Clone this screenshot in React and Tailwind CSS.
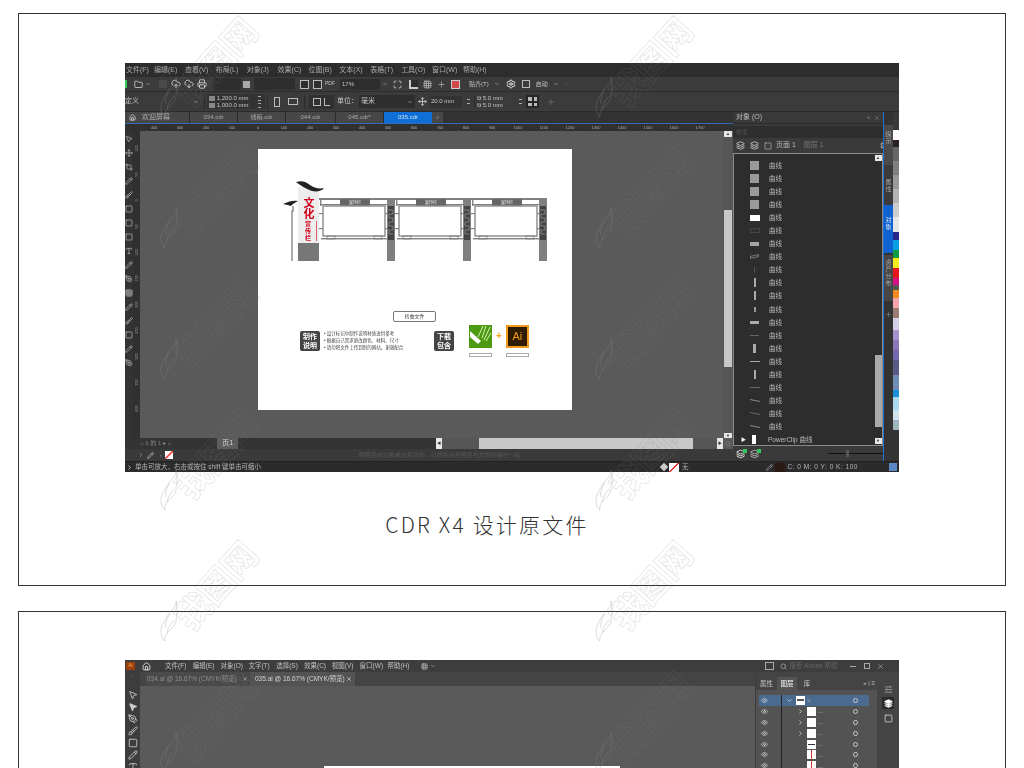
import {
  Brush,
  ChevronDown,
  ChevronRight,
  CloudDownload,
  CloudUpload,
  Crop,
  Eye,
  Folder,
  Grid3x3,
  House,
  Layers,
  Maximize,
  MousePointer2,
  Move,
  PenTool,
  Pencil,
  Plus,
  Printer,
  Search,
  Settings,
  SlidersHorizontal,
  Square,
  Type,
  X,
} from "lucide-react";

const FONT = "font-['Liberation_Sans','Noto_Sans_CJK_SC',sans-serif]";

const CDR_MENU = ["文件(F)", "编辑(E)", "查看(V)", "布局(L)", "对象(J)", "效果(C)", "位图(B)", "文本(X)", "表格(T)", "工具(O)", "窗口(W)", "帮助(H)"];
const CDR_TABS = [
  { label: "034.cdr", w: "w-[48px]" },
  { label: "线稿.cdr", w: "w-[48px]" },
  { label: "044.cdr", w: "w-[50px]" },
  { label: "045.cdr*", w: "w-[48px]" },
];
const RULER = ["400", "300", "200", "100", "0", "100", "200", "300", "400", "500", "600", "700", "800", "900", "1000", "1100", "1200", "1300", "1400", "1500", "1600", "1700"];
const V_RULER = ["100", "50", "0", "50", "100", "150", "200", "250", "300", "350", "400"];

const OBJECT_ROWS = [
  "h-[9px] w-[9px] bg-[#9a9a9a]",
  "h-[9px] w-[9px] bg-[#9a9a9a]",
  "h-[9px] w-[9px] bg-[#9a9a9a]",
  "h-[9px] w-[9px] bg-[#9a9a9a]",
  "h-[6px] w-[10px] bg-white",
  "h-[5px] w-[10px] border border-[#4a4340]",
  "h-[4px] w-[9px] bg-[#a5a5a5]",
  "h-[3px] w-[9px] -skew-y-12 border border-[#777]",
  "h-[6px] w-px bg-[#555]",
  "h-[9px] w-[2px] bg-[#aaa]",
  "h-[9px] w-[2px] bg-[#aaa]",
  "h-[5px] w-[2px] bg-[#999]",
  "h-[3px] w-[9px] bg-[#aaa]",
  "h-px w-[9px] bg-[#666]",
  "h-[9px] w-[3px] bg-[#aaa]",
  "h-px w-[10px] bg-[#aaa]",
  "h-[9px] w-[2px] bg-[#aaa]",
  "h-px w-[10px] bg-[#666]",
  "h-px w-[10px] rotate-12 bg-[#888]",
  "h-px w-[10px] rotate-12 bg-[#666]",
  "h-px w-[10px] rotate-12 bg-[#888]",
];

const PALETTE = [
  "h-[18px] bg-[#3a3a3a]", "h-[10px] bg-white", "h-[7px] bg-[#2b211f]", "h-[14px] bg-[#666]", "h-[14px] bg-[#808080]", "h-[14px] bg-[#999]", "h-[14px] bg-[#b3b3b3]", "h-[14px] bg-[#ccc]", "h-[15px] bg-[#e6e6e6]",
  "h-[8px] bg-[#26288a]", "h-[10px] bg-[#0a9fe0]", "h-[8px] bg-[#0f9b46]", "h-[10px] bg-[#f8ec1a]", "h-[10px] bg-[#e3161e]", "h-[7px] bg-[#d3127f]", "h-[5px] bg-[#555]",
  "h-[8px] bg-[#f08c1c]", "h-[10px] bg-[#f2a7ae]", "h-[10px] bg-[#9b7d70]", "h-[12px] bg-[#d6cfe8]", "h-[10px] bg-[#a693cc]", "h-[10px] bg-[#8c76b8]", "h-[10px] bg-[#7566ad]", "h-[15px] bg-[#5b5a86]",
  "h-[15px] bg-[#6f8db5]", "h-[7px] bg-[#1b8ed8]", "h-[13px] bg-[#a9d8ef]", "h-[10px] bg-[#cfe3ec]", "h-[10px] bg-[#9fb4bd]",
];

const AI_MENU = ["文件(F)", "编辑(E)", "对象(O)", "文字(T)", "选择(S)", "效果(C)", "视图(V)", "窗口(W)", "帮助(H)"];
const AI_TOOLS = [MousePointer2, MousePointer2, PenTool, Brush, Square, Pencil, Type];
const AI_LAYERS = ["main", "group", "group", "group", "mark", "path", "path"];

function Flame() {
  return (
    <svg viewBox="0 0 24 42" className="h-[42px] w-[24px] shrink-0 fill-none stroke-[#8a8a8a]/30">
      <path d="M18 1c1 6-5 9-8 14S3 26 3 31s1 8 4 10c-1-5 2-8 5-11s7-7 6-12c2-5 1-12 0-17Z" />
      <path d="M12 14c-3 4-5 9-4 14M16 20c-3 4-6 7-7 13" />
    </svg>
  );
}

function Watermark() {
  return (
    <div className="relative h-[131px] w-[110px]">
      <div className="absolute left-0 top-[66px]">
        <Flame />
      </div>
      <div className="absolute left-[2px] top-[32px] flex h-[40px] w-[112px] -rotate-[48deg] items-center justify-center whitespace-nowrap text-[35px] font-bold leading-none tracking-[-1px] text-transparent [-webkit-text-stroke:1px_rgba(125,125,125,0.18)]">
        我图网
      </div>
    </div>
  );
}

function Well({ className = "" }) {
  return <div className={`h-[12px] shrink-0 bg-[#2e2e2e] ${className}`} />;
}

function Spinner() {
  return (
    <div className="flex w-[12px] shrink-0 flex-col items-center justify-center gap-[3px]">
      <span className="h-px w-[3px] bg-[#aaa]" />
      <span className="h-px w-[3px] bg-[#aaa]" />
    </div>
  );
}

function CdrMenuBar() {
  return (
    <div className="flex h-[14px] shrink-0 items-center bg-[#2d2d2d] text-[7px] text-[#aaa]">
      <span className="w-[29px] shrink-0 pl-px">文件(F)</span>
      {CDR_MENU.slice(1).map((item) => (
        <span key={item} className="w-[30.9px] shrink-0 whitespace-nowrap">
          {item}
        </span>
      ))}
    </div>
  );
}

function CdrToolBar() {
  return (
    <div className="flex h-[15px] shrink-0 items-center border-b border-[#2b2b2b] bg-[#3b3b3b] text-[6px] text-[#c5c5c5]">
      <span className="h-[8px] w-[2px] bg-[#35c75a]" />
      <Folder size={9} className="ml-[7px] text-[#ddd]" />
      <ChevronDown size={6} className="ml-[2px]" />
      <span className="ml-[8px] h-[8px] w-[8px] bg-[#4a4a4a]" />
      <CloudUpload size={10} className="ml-[4px] text-[#ddd]" />
      <CloudDownload size={10} className="ml-[3px] text-[#ddd]" />
      <Printer size={10} className="ml-[3px] text-[#ddd]" />
      <Well className="ml-[6px] w-[28px]" />
      <span className="ml-[2px] h-[7px] w-[7px] bg-[#aaa]" />
      <Well className="ml-[4px] w-[41px]" />
      <span className="ml-[5px] h-[9px] w-[9px] border border-[#bbb] bg-[#2e2e2e]" />
      <span className="ml-[4px] h-[9px] w-[9px] border border-[#bbb] bg-[#2e2e2e]" />
      <span className="ml-[3px] w-[10px] text-[5px]">PDF</span>
      <div className="ml-[5px] flex h-[11px] w-[40px] items-center bg-[#2e2e2e] pl-[2px]">17%</div>
      <ChevronDown size={6} className="ml-[2px]" />
      <Maximize size={9} className="ml-[5px] text-[#ddd]" />
      <span className="ml-[7px] h-[9px] w-[9px] border-b-2 border-l-2 border-[#ccc] bg-[#2e2e2e]" />
      <Grid3x3 size={9} className="ml-[5px] bg-[#2e2e2e] text-[#ccc]" />
      <Plus size={9} className="ml-[5px] text-[#aaa]" />
      <span className="ml-[5px] h-[9px] w-[9px] border border-[#ccc] bg-[#d0494a]" />
      <span className="ml-[9px] whitespace-nowrap">贴齐(T)</span>
      <ChevronDown size={6} className="ml-[5px]" />
      <Settings size={10} className="ml-[6px] text-white" />
      <span className="ml-[6px] h-[8px] w-[8px] border border-[#bbb]" />
      <span className="ml-[6px] whitespace-nowrap">启动</span>
      <ChevronDown size={6} className="ml-[5px]" />
      <X size={7} className="ml-[4px] text-[#555]" />
    </div>
  );
}

function CdrPropertyBar() {
  return (
    <div className="flex h-[20px] shrink-0 items-center border-b border-[#2b2b2b] bg-[#3b3b3b] text-[6px] text-[#c5c5c5]">
      <div className="flex h-[12px] w-[76px] shrink-0 items-center justify-between overflow-hidden pr-[2px] text-[7px]">
        <span>定义</span>
        <ChevronDown size={6} />
      </div>
      <span className="ml-[3px] h-[14px] w-px bg-[#2b2b2b]" />
      <div className="ml-[2px] flex h-[15px] w-[58px] shrink-0 flex-col justify-center bg-[#333] pl-[2px] leading-[7px]">
        <div className="flex items-center gap-[2px]">
          <span className="h-[5px] w-[6px] bg-[#888]" />
          <span className="w-[36px] whitespace-nowrap">1,200.0 mm</span>
          <Spinner />
        </div>
        <div className="flex items-center gap-[2px]">
          <span className="h-[5px] w-[6px] bg-[#888]" />
          <span className="w-[36px] whitespace-nowrap">1,000.0 mm</span>
          <Spinner />
        </div>
      </div>
      <span className="ml-[2px] h-[14px] w-px bg-[#2b2b2b]" />
      <span className="ml-[6px] h-[10px] w-[6px] border border-[#bbb]" />
      <span className="ml-[8px] h-[7px] w-[10px] border border-[#bbb]" />
      <span className="ml-[6px] h-[14px] w-px bg-[#2b2b2b]" />
      <div className="ml-[4px] flex h-[14px] w-[25px] items-center justify-center gap-[3px] bg-[#303030]">
        <span className="h-[8px] w-[8px] border border-[#bbb]" />
        <span className="h-[8px] w-[6px] border-b border-l border-[#bbb]" />
      </div>
      <span className="ml-[3px] whitespace-nowrap text-[7px]">单位：</span>
      <div className="ml-[1px] flex h-[13px] w-[56px] items-center justify-between bg-[#2e2e2e] px-[2px] text-[7px]">
        <span>毫米</span>
        <ChevronDown size={6} />
      </div>
      <Move size={9} className="ml-[3px] text-[#ddd]" />
      <div className="ml-[2px] flex h-[12px] w-[33px] items-center bg-[#333] pl-[2px]">20.0 mm</div>
      <Spinner />
      <span className="h-[14px] w-px bg-[#2b2b2b]" />
      <div className="ml-[2px] flex h-[15px] w-[37px] flex-col justify-center leading-[7px]">
        <span className="whitespace-nowrap">⧉ 5.0 mm</span>
        <span className="whitespace-nowrap">⧉ 5.0 mm</span>
      </div>
      <Spinner />
      <div className="flex h-[13px] w-[13px] shrink-0 items-center justify-center bg-[#262626]">
        <div className="grid h-[9px] w-[9px] grid-cols-2 gap-[2px]">
          <span className="bg-[#bbb]" />
          <span className="bg-[#bbb]" />
          <span className="bg-[#bbb]" />
          <span className="bg-[#bbb]" />
        </div>
      </div>
      <Plus size={8} className="ml-[8px] text-[#777]" />
    </div>
  );
}

function CdrTabs() {
  return (
    <div className="flex h-[12px] shrink-0 border-b border-[#2f6db5] bg-[#333] text-[6px] text-[#aaa]">
      <div className="flex w-[65px] items-center border-r border-[#2b2b2b] bg-[#474747] pl-[4px]">
        <House size={7} className="text-white" />
        <span className="ml-[6px] whitespace-nowrap text-[7px]">欢迎屏幕</span>
      </div>
      {CDR_TABS.map((tab) => (
        <div key={tab.label} className={`flex items-center justify-center border-r border-[#2b2b2b] bg-[#474747] ${tab.w}`}>
          {tab.label}
        </div>
      ))}
      <div className="flex w-[48px] items-center justify-center bg-[#0f6fd6] text-[#cfe2f8]">035.cdr</div>
      <div className="flex w-[11px] items-center justify-center bg-[#474747]">
        <Plus size={7} className="text-[#777]" />
      </div>
    </div>
  );
}

function CdrRuler() {
  return (
    <div className="flex h-[7px] shrink-0 items-center bg-[#303030] pl-[16px] text-[4px] text-[#aaa]">
      {RULER.map((n, i) => (
        <span key={i} className="w-[26px] shrink-0 text-center">
          {n}
        </span>
      ))}
    </div>
  );
}

function CdrToolbox() {
  const icons = [MousePointer2, Move, Crop, Pencil, Brush, Square, Square, Square, Type, Pencil, PenTool, Grid3x3, Pencil, Brush, Square, Pencil, PenTool];
  return (
    <div className="flex w-[8px] shrink-0 flex-col items-center gap-[6px] overflow-hidden bg-[#333] pt-[4px] text-[#bbb]">
      {icons.map((Icon, i) => (
        <Icon key={i} size={8} className="shrink-0" />
      ))}
    </div>
  );
}

function CdrDrawing() {
  const boards = [0, 76, 152];
  return (
    <svg viewBox="0 0 270 92" className="ml-[25px] mt-[21px] h-[92px] w-[270px] shrink-0">
      <path d="M0 34c6-3 11-4 15-3-3 2-6 3-7 5-2-1-5-1-8-2Z" fill="#222" />
      <path d="M10 36v5h-1v50" fill="none" stroke="#888" strokeWidth="1.4" />
      <path d="M15 17v74h21V21Z" fill="#ededed" />
      <rect x="15" y="73" width="21" height="18" fill="#777" />
      <path d="M13 12c6-2 10 0 14 3s9 4 14 3c-2 3-7 4-12 3-6-2-11-5-16-9Z" fill="#222" />
      <text x="26" y="37" textAnchor="middle" fontSize="11" fontWeight="700" fill="#d0021b">文</text>
      <text x="26" y="48" textAnchor="middle" fontSize="11" fontWeight="700" fill="#d0021b">化</text>
      <text x="25" y="56" textAnchor="middle" fontSize="6" fontWeight="700" fill="#d0021b">宣</text>
      <text x="25" y="63" textAnchor="middle" fontSize="6" fontWeight="700" fill="#d0021b">传</text>
      <text x="25" y="70" textAnchor="middle" fontSize="6" fontWeight="700" fill="#d0021b">栏</text>
      <rect x="33" y="51" width="1" height="20" fill="#d9606f" />
      <rect x="36" y="28" width="227" height="2" fill="#808080" />
      {boards.map((dx) => (
        <g key={dx} transform={`translate(${dx} 0)`}>
          <rect x="40" y="36" width="62" height="30" fill="#fff" stroke="#808080" strokeWidth="1.3" />
          <rect x="38" y="68" width="66" height="1.4" fill="#808080" />
          <rect x="37" y="30" width="1.4" height="6" fill="#808080" />
          <rect x="37" y="34" width="67" height="1.2" fill="#808080" />
          <rect x="57" y="29" width="30" height="6.5" fill="#666" />
          <text x="72" y="34" textAnchor="middle" fontSize="4" fill="#eee">宣传栏</text>
          <rect x="104" y="28" width="8" height="63" fill="#808080" />
          <rect x="105" y="36" width="6" height="34" fill="#444" />
          <path d="M105 40h5v4h-4v4h4v4h-4v4h4v4h-4v4h4" fill="none" stroke="#aaa" strokeWidth="0.6" />
          <rect x="36" y="43" width="4" height="1.2" fill="#808080" />
          <rect x="36" y="58" width="4" height="1.2" fill="#808080" />
          <rect x="102" y="43" width="2" height="1.2" fill="#808080" />
          <rect x="102" y="58" width="2" height="1.2" fill="#808080" />
          <rect x="44" y="66" width="8" height="3" fill="none" stroke="#808080" strokeWidth="0.8" />
          <rect x="91" y="66" width="8" height="3" fill="none" stroke="#808080" strokeWidth="0.8" />
        </g>
      ))}
    </svg>
  );
}

function CornerTile({ lines }) {
  return (
    <div className="flex h-[20px] w-[20px] shrink-0 flex-col items-center justify-center rounded-[2px] bg-[#444] text-[7px] font-bold leading-[9px] text-white">
      <span>{lines[0]}</span>
      <span>{lines[1]}</span>
    </div>
  );
}

function CdrPage() {
  return (
    <div className="flex h-[261px] w-[314px] shrink-0 flex-col bg-white">
      <CdrDrawing />
      <div className="ml-[135px] mt-[49px] flex h-[11px] w-[43px] items-center justify-center rounded-[2px] border border-[#777] text-[5px] text-[#444]">
        转曲文件
      </div>
      <div className="ml-[42px] mt-[3px] flex items-start">
        <div className="mt-[6px]">
          <CornerTile lines={["制作", "说明"]} />
        </div>
        <div className="ml-[4px] mt-[5px] w-[110px] text-[4.5px] leading-[7px] text-[#444]">
          <p>• 设计标记中制作说明材质进供参考</p>
          <p>• 根据自己需求更改颜色、材料、尺寸</p>
          <p>• 请勿把文件上传到别的网站，谢谢配合</p>
        </div>
        <div className="mt-[6px]">
          <CornerTile lines={["下载", "包含"]} />
        </div>
        <div className="ml-[15px] flex flex-col items-center">
          <svg viewBox="0 0 23 23" className="h-[23px] w-[23px]">
            <rect width="23" height="23" fill="#4c9a12" />
            <path d="M14 1 9 12M17 1l-4 12M21 2l-6 13M22 8l-5 8" stroke="#d9efb0" strokeWidth="1" />
            <path d="M1 6 12 16l-3 3L1 12Z" fill="#fff" />
          </svg>
          <span className="mt-[5px] h-[4px] w-[23px] border border-[#aaa]" />
        </div>
        <span className="ml-[4px] mt-[3px] text-[10px] font-bold text-[#f5a623]">+</span>
        <div className="ml-[4px] flex flex-col items-center">
          <div className="flex h-[23px] w-[23px] items-center justify-center border-2 border-[#f09a1e] bg-[#2f1c03] text-[11px] text-[#f09a1e]">Ai</div>
          <span className="mt-[5px] h-[4px] w-[23px] border border-[#aaa]" />
        </div>
      </div>
    </div>
  );
}

function CdrDocker() {
  return (
    <div className="flex w-[150px] shrink-0 flex-col bg-[#3a3a3a] text-[#bbb]">
      <div className="flex h-[12px] shrink-0 items-center justify-between border-b border-[#2b2b2b] bg-[#3a3a3a] px-[3px] text-[7px]">
        <span>对象 (O)</span>
        <div className="flex items-center gap-[4px] text-[#888]">
          <span className="text-[6px]">»</span>
          <X size={6} />
        </div>
      </div>
      <div className="mt-[2px] flex h-[12px] shrink-0 items-center bg-[#2e2e2e] pl-[3px] text-[6px] text-[#555]">搜索</div>
      <div className="flex h-[15px] shrink-0 items-center whitespace-nowrap pl-[3px] text-[7px]">
        <Layers size={9} className="shrink-0 text-[#ddd]" />
        <Layers size={9} className="ml-[5px] shrink-0 text-[#ddd]" />
        <Square size={8} className="ml-[5px] shrink-0" />
        <span className="ml-[4px]">页面 1</span>
        <span className="ml-[8px] text-[#777]">图层 1</span>
        <Settings size={9} className="ml-[56px] shrink-0 text-white" />
      </div>
      <div className="flex h-[293px] shrink-0 border border-[#8a8a8a] bg-[#2d2d2d]">
        <div className="w-[140px] shrink-0 pl-[15px] pt-[5px] text-[6.5px] leading-[13.05px]">
          {OBJECT_ROWS.map((thumb, i) => (
            <div key={i} className="flex h-[13.05px] items-center">
              <div className="flex w-[11px] shrink-0 justify-center">
                <span className={`block ${thumb}`} />
              </div>
              <span className="ml-[9px]">曲线</span>
            </div>
          ))}
          <div className="-ml-[8px] flex h-[13px] items-center">
            <span className="w-[8px] text-[5px] text-white">▶</span>
            <span className="ml-[3px] h-[9px] w-[4px] bg-white" />
            <span className="ml-[12px] whitespace-nowrap">PowerClip 曲线</span>
          </div>
        </div>
        <div className="flex w-[8px] shrink-0 flex-col items-center text-[#333]">
          <span className="mt-[1px] h-[6px] w-[7px] bg-[#e8e8e8] text-center text-[4px] leading-[6px]">▲</span>
          <div className="mt-[194px] h-[72px] w-[7px] bg-[#a9a9a9]" />
          <span className="mb-[1px] mt-auto h-[6px] w-[7px] bg-[#e8e8e8] text-center text-[4px] leading-[6px]">▼</span>
        </div>
      </div>
      <div className="flex h-[15px] shrink-0 items-center pl-[3px]">
        <Layers size={10} className="text-white" />
        <span className="-ml-[2px] -mt-[6px] h-[4px] w-[4px] bg-[#35c75a]" />
        <Layers size={10} className="ml-[3px] text-[#ccc]" />
        <span className="-ml-[2px] -mt-[6px] h-[4px] w-[4px] bg-[#35c75a]" />
        <div className="relative ml-[67px] h-px w-[60px] bg-[#111]">
          <span className="absolute left-[18px] -top-[3px] h-[7px] w-[3px] bg-[#555]" />
        </div>
      </div>
    </div>
  );
}

function CdrSideTabs() {
  return (
    <div className="flex w-[16px] shrink-0 border-l border-[#1f6fd0] bg-[#333]">
      <div className="flex w-[9px] shrink-0 flex-col items-center pt-[13px] text-[6px] leading-[7px] text-[#aaa]">
        <div className="flex h-[40px] w-full flex-col items-center bg-[#4a4a4a] pt-[6px]">
          <span>提</span>
          <span>示</span>
        </div>
        <div className="flex h-[40px] w-full flex-col items-center bg-[#3b3b3b] pt-[14px]">
          <span>属</span>
          <span>性</span>
        </div>
        <div className="flex h-[48px] w-full flex-col items-center bg-[#0f62d0] pt-[12px] text-[#dbe8fa]">
          <span>对</span>
          <span>象</span>
        </div>
        <div className="mt-[2px] flex h-[46px] w-full flex-col items-center bg-[#474747] pt-[4px]">
          <span>资</span>
          <span>产</span>
          <span>分</span>
          <span>布</span>
        </div>
        <Plus size={7} className="mt-[10px] text-[#888]" />
      </div>
      <div className="flex w-[6px] shrink-0 flex-col">
        {PALETTE.map((c, i) => (
          <span key={i} className={`block shrink-0 ${c}`} />
        ))}
      </div>
    </div>
  );
}

function CorelWindow() {
  return (
    <div className={`flex h-[409px] w-[774px] shrink-0 flex-col overflow-hidden bg-[#333] blur-[0.4px] ${FONT}`}>
      <CdrMenuBar />
      <CdrToolBar />
      <CdrPropertyBar />
      <div className="flex h-[349px] shrink-0">
        <div className="flex w-[608px] shrink-0 flex-col">
          <CdrTabs />
          <CdrRuler />
          <div className="flex h-[307px] shrink-0">
            <CdrToolbox />
            <div className="flex w-[7px] shrink-0 flex-col items-center gap-[15px] bg-[#303030] pt-[12px] text-[4px] leading-[11px] text-[#999]">
              {V_RULER.map((n, i) => (
                <span key={i} className="-rotate-90">
                  {n}
                </span>
              ))}
            </div>
            <div className="w-[583px] shrink-0 bg-[#5a5a5a] pl-[118px] pt-[18px]">
              <CdrPage />
            </div>
            <div className="flex w-[10px] shrink-0 flex-col items-center bg-[#565656]">
              <span className="h-[6px] w-[8px] bg-[#e5e5e5] text-center text-[4px] leading-[6px] text-[#333]">▲</span>
              <span className="mt-[73px] h-[157px] w-[8px] bg-[#c8c8c8]" />
              <span className="mt-auto h-[5px] w-[8px] bg-[#e5e5e5] text-center text-[4px] leading-[5px] text-[#333]">▼</span>
            </div>
          </div>
          <div className="flex h-[11px] shrink-0 bg-[#3a3a3a] text-[6px] text-[#888]">
            <div className="flex w-[311px] shrink-0 items-center bg-[#333] pl-[15px]">
              <span>⌂ 1 的 1 ▸ ⌂</span>
              <span className="ml-[46px] flex h-full w-[21px] items-center justify-center bg-[#5c5c5c] text-[7px] text-[#ddd]">页1</span>
            </div>
            <span className="h-full w-[6px] shrink-0 bg-[#e8e8e8] text-center text-[4px] leading-[11px] text-[#333]">◀</span>
            <div className="w-[275px] shrink-0 bg-[#565656] pl-[37px]">
              <div className="h-full w-[214px] bg-[#c8c8c8]" />
            </div>
            <span className="h-full w-[6px] shrink-0 bg-[#e8e8e8] text-center text-[4px] leading-[11px] text-[#333]">▶</span>
            <div className="flex w-[10px] shrink-0 items-center justify-center bg-[#5a5a5a]">
              <Search size={6} />
            </div>
          </div>
          <div className="flex h-[12px] shrink-0 items-center bg-[#3a3a3a] text-[6px]">
            <ChevronRight size={6} className="ml-[13px] text-[#ccc]" />
            <Pencil size={7} className="ml-[3px] text-[#ddd]" />
            <span className="ml-[6px] text-[#999]">‹</span>
            <span className="ml-[3px] h-[8px] w-[8px] bg-[linear-gradient(135deg,#fff_42%,#e33_45%,#e33_55%,#fff_58%)]" />
            <span className="ml-[185px] whitespace-nowrap italic text-[#585858]">所颜色或对象单击至此处，以便将这些颜色与文档存储在一起</span>
          </div>
        </div>
        <CdrDocker />
        <CdrSideTabs />
      </div>
      <div className="flex h-[11px] shrink-0 items-center border-t border-[#222] bg-[#2b2b2b] text-[6.5px] text-[#b5b5b5]">
        <ChevronRight size={7} className="ml-px text-white" />
        <span className="ml-[2px] whitespace-nowrap">单击可放大，右击或按住 shift 键单击可缩小</span>
        <span className="ml-[400px] h-[6px] w-[6px] rotate-45 bg-[#ccc]" />
        <span className="ml-[2px] h-[9px] w-[10px] bg-[linear-gradient(135deg,#fff_44%,#e33_46%,#e33_54%,#fff_56%)]" />
        <span className="ml-[3px]">无</span>
        <Pencil size={7} className="ml-[77px]" />
        <span className="ml-[2px] h-[9px] w-[10px] bg-[#2a1a14]" />
        <span className="ml-[3px] whitespace-nowrap tracking-[0.5px]">C: 0 M: 0 Y: 0 K: 100</span>
        <span className="ml-[31px] h-[8px] w-[8px] bg-[#5a88c5]" />
      </div>
    </div>
  );
}

function IllustratorWindow() {
  return (
    <div className={`flex h-[108px] w-[774px] shrink-0 flex-col overflow-hidden bg-[#535353] blur-[0.4px] ${FONT}`}>
      <div className="flex h-[12px] shrink-0 items-center bg-[#3d3d3d] text-[6.5px] text-[#c0c0c0]">
        <span className="ml-[1px] flex h-[8px] w-[9px] items-center justify-center bg-[#9c3d0e] text-[5px] text-[#f7b14a]">Ai</span>
        <House size={9} className="ml-[7px] text-white" />
        <div className="ml-[14px] flex">
          {AI_MENU.map((item) => (
            <span key={item} className="w-[27.8px] shrink-0 whitespace-nowrap">
              {item}
            </span>
          ))}
        </div>
        <Grid3x3 size={7} className="ml-[6px]" />
        <ChevronDown size={6} className="ml-[2px]" />
        <span className="ml-[329px] h-[8px] w-[9px] border border-[#aaa]" />
        <Search size={7} className="ml-[6px]" />
        <span className="ml-[2px] whitespace-nowrap text-[#666]">搜索 Adobe 帮助</span>
        <span className="ml-[12px] h-px w-[6px] bg-[#aaa]" />
        <span className="ml-[8px] h-[6px] w-[6px] border border-[#aaa]" />
        <X size={7} className="ml-[7px]" />
      </div>
      <div className="flex min-h-0 flex-1">
        <div className="flex w-[630px] shrink-0 flex-col">
          <div className="flex h-[14px] shrink-0 bg-[#444] text-[6.5px]">
            <div className="flex w-[15px] shrink-0 items-start justify-center bg-[#3d3d3d] text-[#888]">·</div>
            <div className="ml-[5px] flex w-[105px] shrink-0 items-center justify-between overflow-hidden bg-[#4a4a4a] px-[2px] text-[#8e8e8e]">
              <span className="whitespace-nowrap">034.ai @ 16.67% (CMYK/预览)</span>
              <X size={6} className="shrink-0 text-[#ccc]" />
            </div>
            <div className="flex w-[105px] shrink-0 items-center justify-between bg-[#535353] pl-[5px] pr-[3px] text-[#d5d5d5]">
              <span className="whitespace-nowrap">035.ai @ 16.67% (CMYK/预览)</span>
              <X size={6} className="shrink-0 text-white" />
            </div>
          </div>
          <div className="flex min-h-0 flex-1">
            <div className="flex w-[15px] shrink-0 flex-col items-center gap-[2px] bg-[#3d3d3d] pt-[4px] text-[#d0d0d0]">
              {AI_TOOLS.map((Icon, i) => (
                <Icon key={i} size={10} className={`shrink-0 ${i === 1 ? "fill-[#d0d0d0]" : ""}`} />
              ))}
            </div>
            <div className="flex-1 bg-[#5a5a5a] pl-[184px] pt-[80px]">
              <div className="h-[10px] w-[296px] bg-white" />
            </div>
          </div>
        </div>
        <div className="flex w-[122px] shrink-0 flex-col border-l border-[#3d3d3d] bg-[#535353] text-[6.5px] text-[#c5c5c5]">
          <div className="h-[5px] shrink-0 bg-[#444]" />
          <div className="flex h-[13px] shrink-0 items-end bg-[#444]">
            <span className="flex h-full w-[21px] items-center justify-center">属性</span>
            <span className="flex h-full w-[20px] items-center justify-center bg-[#535353] text-white">图层</span>
            <span className="flex h-full w-[20px] items-center justify-center">库</span>
            <span className="ml-auto mr-[2px] flex h-full items-center text-[6px]">» | ≡</span>
          </div>
          <div className="flex-1 pl-[3px] pt-[5px]">
            {AI_LAYERS.map((kind, i) => (
              <div key={i} className={`flex h-[10.9px] w-[110px] items-center ${i === 0 ? "bg-[#4a6a8f]" : ""}`}>
                <Eye size={7} className="ml-[2px] shrink-0 text-[#ddd]" />
                <span className="ml-[13px] h-full w-px shrink-0 bg-[#222]" />
                <div className={`flex w-[10px] shrink-0 items-center ${i === 0 ? "ml-[4px]" : "ml-[15px]"}`}>
                  {i === 0 ? <ChevronDown size={7} className="text-white" /> : i < 4 ? <ChevronRight size={7} className="text-white" /> : null}
                </div>
                <span className="flex h-[9px] w-[9px] shrink-0 items-center justify-center bg-white">
                  {kind === "mark" ? <span className="h-px w-[7px] bg-[#333]" /> : null}
                  {kind === "path" ? <span className="h-full w-px bg-[#d33]" /> : null}
                  {kind === "main" ? <span className="h-[2px] w-[7px] bg-[#555]" /> : null}
                </span>
                <span className="ml-[2px] text-[#aaa]">{i === 0 ? "<" : "..."}</span>
                <span className="ml-auto mr-[11px] h-[5px] w-[5px] rounded-full border border-[#ccc]" />
              </div>
            ))}
          </div>
        </div>
        <div className="flex w-[22px] shrink-0 flex-col items-center gap-[3px] bg-[#444] pt-[13px] text-white">
          <SlidersHorizontal size={9} className="text-[#aaa]" />
          <span className="flex h-[12px] w-[12px] items-center justify-center bg-[#2b2b2b]">
            <Layers size={9} className="fill-white" />
          </span>
          <Square size={9} className="mt-[2px] text-[#ddd]" />
        </div>
      </div>
    </div>
  );
}

export default function App() {
  return (
    <div className={`relative h-[768px] w-full overflow-hidden bg-white ${FONT}`}>
      <div className="flex flex-col px-[18px] pt-[13px]">
        <div className="flex h-[573px] flex-col items-center border border-[#333] pt-[49px]">
          <CorelWindow />
          <p className="mr-[50px] mt-[36px] font-['Noto_Sans_CJK_SC',sans-serif] text-[21px] font-light leading-[32px] tracking-[2.2px] text-[#333]">CDR X4 设计原文件</p>
        </div>
        <div className="mt-[25px] flex h-[300px] flex-col items-center border border-[#333] pt-[48px]">
          <IllustratorWindow />
        </div>
      </div>
      <div className="pointer-events-none absolute inset-0 grid auto-rows-[131px] grid-cols-[repeat(2,435px)] overflow-hidden pl-[158px] pt-[10px]">
        {Array.from({ length: 12 }).map((_, i) => (
          <Watermark key={i} />
        ))}
      </div>
    </div>
  );
}
